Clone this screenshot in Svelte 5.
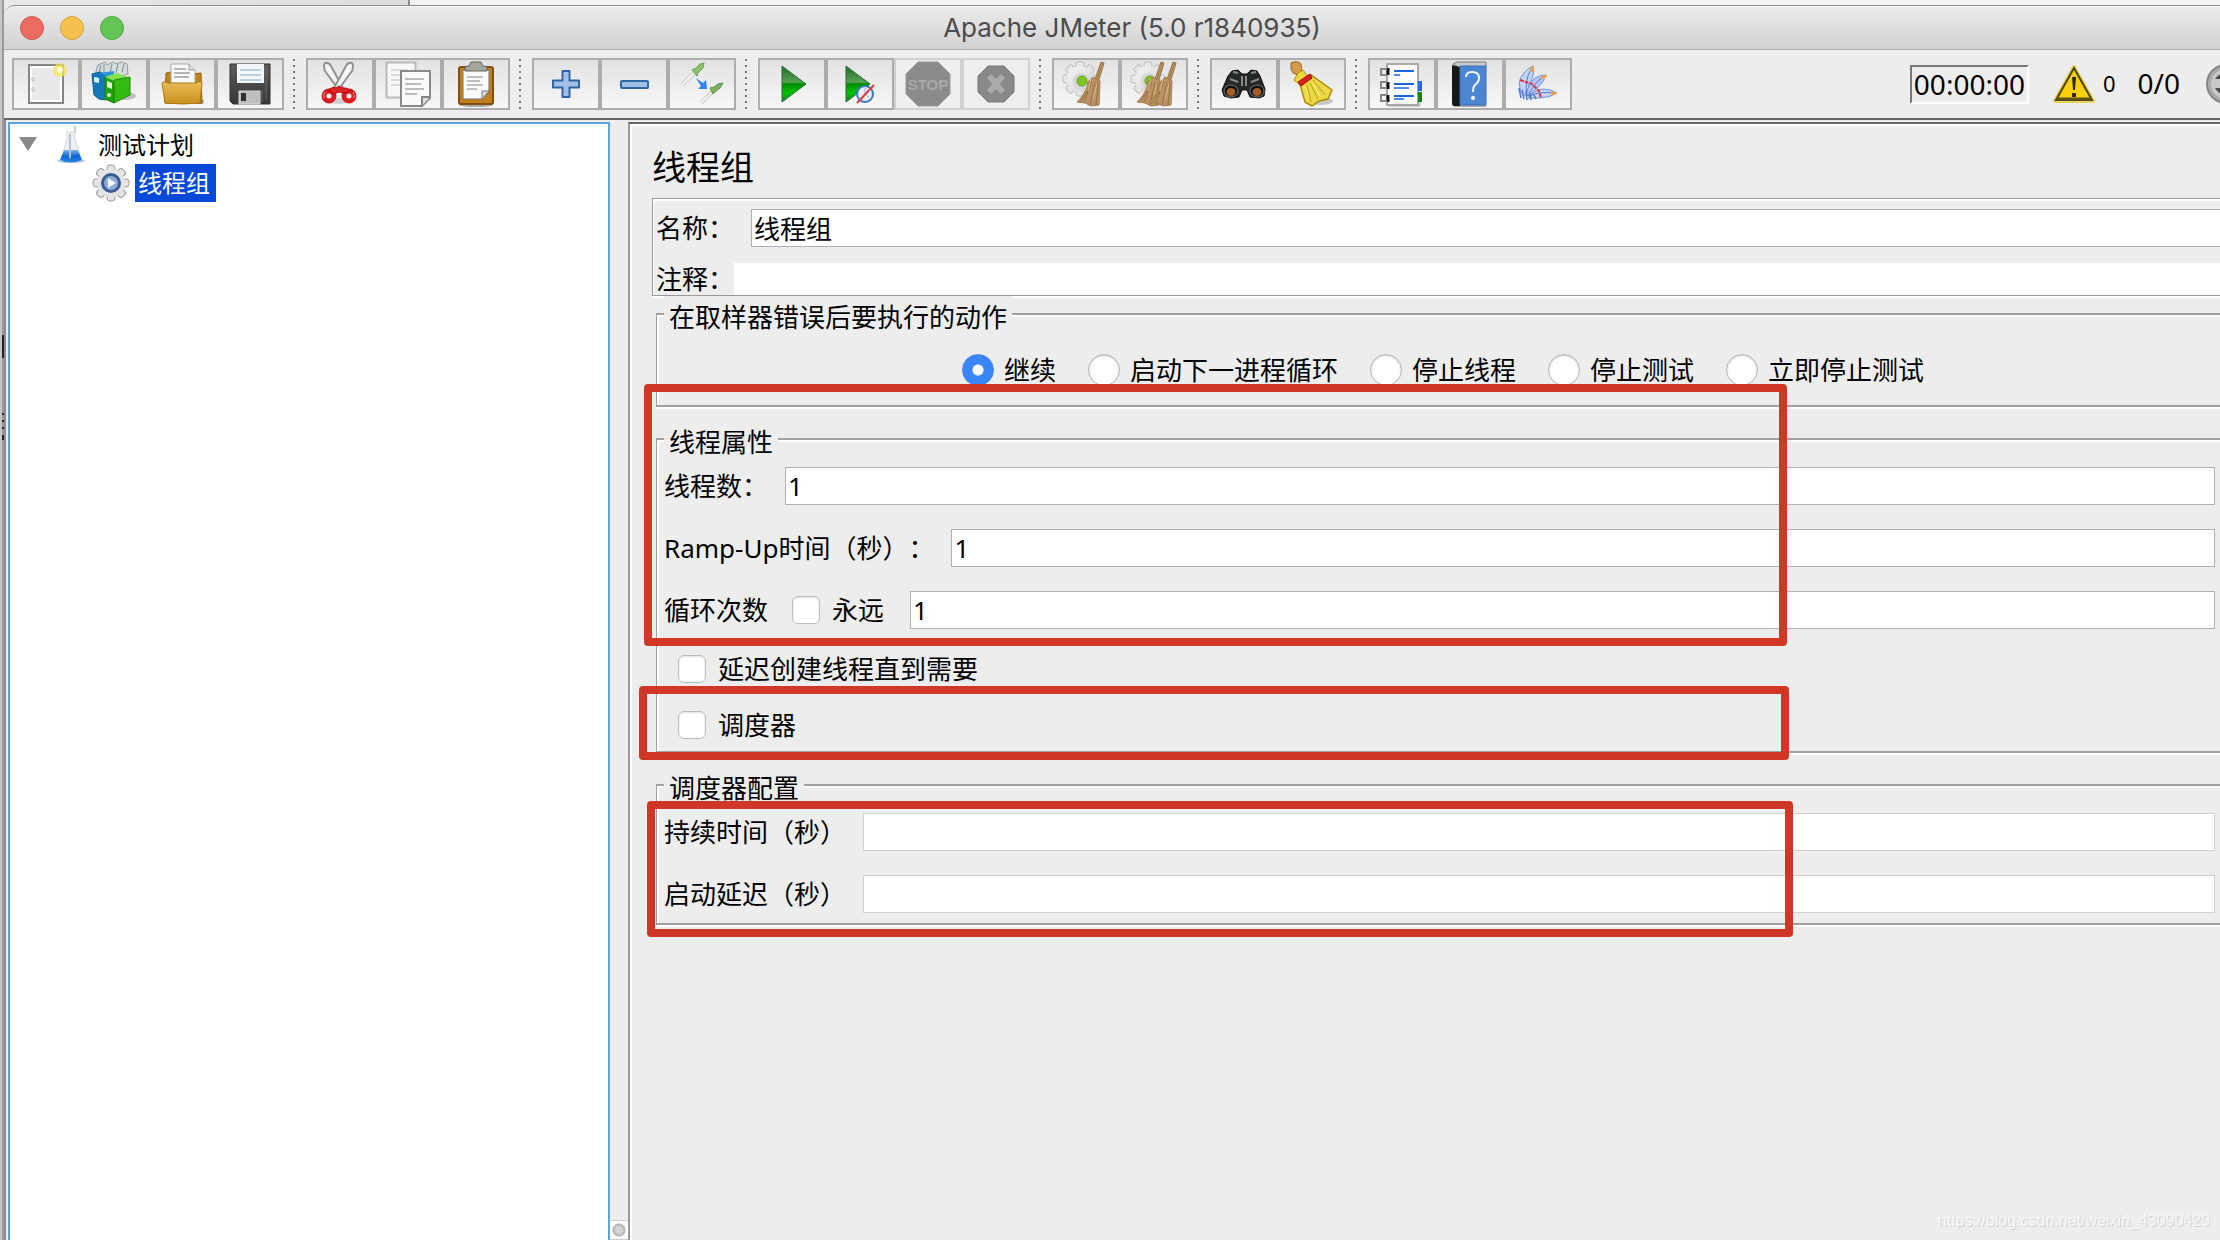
<script lang="ts">
	interface Tool {
		id: string;
		label: string;
		disabled?: boolean;
	}

	/* Toolbar buttons, one array per separated group. */
	const TOOL_GROUPS: Tool[][] = [
		[
			{ id: 'new', label: '新建' },
			{ id: 'templates', label: '模板' },
			{ id: 'open', label: '打开' },
			{ id: 'save', label: '保存' }
		],
		[
			{ id: 'cut', label: '剪切' },
			{ id: 'copy', label: '复制' },
			{ id: 'paste', label: '粘贴' }
		],
		[
			{ id: 'expand', label: '展开' },
			{ id: 'collapse', label: '折叠' },
			{ id: 'toggle', label: '切换' }
		],
		[
			{ id: 'start', label: '启动' },
			{ id: 'start-no-timers', label: '不停顿启动' },
			{ id: 'stop', label: '停止', disabled: true },
			{ id: 'shutdown', label: '关闭', disabled: true }
		],
		[
			{ id: 'clear', label: '清除' },
			{ id: 'clear-all', label: '清除全部' }
		],
		[
			{ id: 'search', label: '查找' },
			{ id: 'search-reset', label: '重置查找' }
		],
		[
			{ id: 'functions', label: '函数助手' },
			{ id: 'help', label: '帮助' },
			{ id: 'about', label: '关于' }
		]
	];

	const ERROR_ACTIONS = ['继续', '启动下一进程循环', '停止线程', '停止测试', '立即停止测试'];

	/* Teeth of the gear icons, one every 45 degrees. */
	const TEETH = [0, 45, 90, 135, 180, 225, 270, 315];

	let onError = $state('继续');
	let name = $state('线程组');
	let comment = $state('');
	let threads = $state('1');
	let rampUp = $state('1');
	let loops = $state('1');
	let forever = $state(false);
	let delayed = $state(false);
	let scheduler = $state(false);
	let duration = $state('');
	let startDelay = $state('');
</script>

{#snippet gear()}
	{#each TEETH as angle (angle)}
		<rect x="14" y="2" width="8" height="8" rx="2" fill="#e6e6e6" stroke="#bdbdbd" transform="rotate({angle} 18 19)" />
	{/each}
	<circle cx="18" cy="19" r="13" fill="url(#silver)" />
	<circle cx="19" cy="21" r="8" fill="#d6d6d6" />
	<circle cx="20" cy="21" r="5" fill="#7cc522" stroke="#62a41c" />
{/snippet}

{#snippet broom()}
	<path d="M39 2l3 1-6 20-4-1z" fill="#b08a5c" stroke="#9b784c" />
	<path d="M31 17l7 4-1 24-8 1-6-3-8-1c6-6 10-12 11-20z" fill="#bb9264" stroke="#a37c4c" />
	<path d="M30 21l-8 21M33 22l-5 23M36 23l-2 22M28 27l-9 14" stroke="#96733f" fill="none" />
	<path d="M29 19l-3 12M35 24l-4 15" stroke="#dcb88b" fill="none" />
{/snippet}

{#snippet icon(id: string)}
	<svg class="icon" viewBox="0 0 48 48" width="48" height="48" aria-hidden="true">
		{#if id === 'new'}
			<rect x="7" y="5" width="34" height="38" fill="#fff" stroke="#858585" stroke-width="2" />
			<rect x="10" y="8" width="28" height="32" fill="#e9e9e9" />
			<path d="M10 18h2v3h-2zM10 28h2v3h-2z" fill="#fff" stroke="#bbb" />
			<circle cx="38" cy="10" r="7" fill="#f3e45a" opacity=".75" />
			<circle cx="38" cy="10" r="3" fill="#fffbd8" />
		{:else if id === 'templates'}
			<ellipse cx="34" cy="36" rx="12" ry="4" fill="#999" opacity=".6" />
			<path d="M5 15l3-10 7-3 2 3 6-3 3 2 5-2 6 2 1 10-16 6z" fill="#d4dcdf" stroke="#8e999d" />
			<path d="M9 13l2-8M14 13V4M20 13l2-9M26 13l2-9M32 12l2-8" stroke="#7f8b90" fill="none" />
			<path d="M2 14l8-2 6 3v25l-7-1-5-4z" fill="#1679bb" stroke="#0b5d95" />
			<path d="M9 13l15-2v10l-9 7V15z" fill="#2f95d4" />
			<path d="M4 17l5 1v5l-5-1z" fill="#d8f1ff" />
			<path d="M15 17l9 3v23l-9-4z" fill="#22a30d" stroke="#158204" />
			<path d="M15 17l12-4 13 5-16 3z" fill="#83e452" />
			<path d="M24 20l16-3v18l-16 8z" fill="#35ba14" stroke="#1c8a05" />
			<path d="M17 21l5 2v6l-5-2z" fill="#ddffd0" />
			<circle cx="19" cy="35" r="2" fill="#d8ffc7" />
		{:else if id === 'open'}
			<path d="M5 44h40l1-4z" fill="#999" />
			<path d="M8 13l5-1 2 4h20v-2l8-1 1 30H7z" fill="#bd841a" stroke="#95610b" />
			<path d="M13 4h18l6 6v15H13z" fill="#fafafa" stroke="#a8a8a8" />
			<path d="M31 4v6h6" fill="#ddd" stroke="#999" />
			<path d="M16 9h12M16 13h16M16 17h15" stroke="#a0a0a0" stroke-width="1.5" />
			<path d="M4 23q2-3 6 0h28q5-3 6 0l-2 20q-17 2-35 0z" fill="url(#gold)" stroke="#ad7811" />
		{:else if id === 'save'}
			<path d="M4 4h40v40H7l-3-3z" fill="url(#dark)" stroke="#303030" />
			<path d="M11 4h27v19H11z" fill="#f3f7fa" />
			<path d="M14 10h21M14 15h21M14 20h21" stroke="#a9c4d5" stroke-width="1.5" />
			<path d="M13 31h21v13H13z" fill="#bdbdbd" stroke="#d8d8d8" />
			<path d="M15 33h5v8h-5z" fill="#303030" />
			<path d="M36 30v12M40 8v32" stroke="#696969" />
		{:else if id === 'cut'}
			<ellipse cx="23" cy="41" rx="10" ry="3" fill="#aaa" opacity=".5" />
			<path d="M9 3q4-1 6 3l12 22-4 2L9 11q-2-5 0-8z" fill="#f1f1f1" stroke="#929292" stroke-width="2" />
			<path d="M36 3q-4-1-6 3L18 28l4 2L36 11q2-5 0-8z" fill="#f6f6f6" stroke="#929292" stroke-width="2" />
			<ellipse cx="13" cy="36" rx="5" ry="5" fill="none" stroke="#db1c21" stroke-width="5" />
			<ellipse cx="33" cy="36" rx="5" ry="5" fill="none" stroke="#db1c21" stroke-width="5" />
			<path d="M12 30q5-4 8-2l3-2 3 2q5-1 9 3l-7 2-5-1-5 2z" fill="#df2428" stroke="#b9080e" />
			<path d="M9 32q-2 3-1 6M37 32q2 3 1 6" stroke="#ff8c8c" fill="none" />
		{:else if id === 'copy'}
			<path d="M2.5 2.5h29v35h-29z" fill="#f8f8f8" stroke="#b9b9b9" stroke-width="2" />
			<path d="M7 10h16M7 15h16M7 20h9M7 25h9" stroke="#d0d0d0" stroke-width="1.5" />
			<path d="M17 11h29v27l-8 8H17z" fill="#fafafa" stroke="#898989" stroke-width="2" />
			<path d="M46 37h-8v9" fill="#ddd" stroke="#858585" stroke-width="2" />
			<path d="M21 19h19M21 24h16M21 29h19M21 34h12" stroke="#a8a8a8" stroke-width="1.5" />
		{:else if id === 'paste'}
			<ellipse cx="24" cy="45" rx="17" ry="2" fill="#aaa" />
			<rect x="7" y="7" width="34" height="37" rx="2" fill="#c27e1c" stroke="#80500e" stroke-width="2" />
			<path d="M11 10h26v22l-7 7H11z" fill="#fafafa" stroke="#777" />
			<path d="M37 31h-7v8z" fill="#ddd" stroke="#777" />
			<path d="M13 11V8q0-2 4-2l2-4h10l2 4q4 0 4 2v3z" fill="#a4a79d" stroke="#62655d" />
			<path d="M15 17h16M15 21h13M15 25h16M15 29h10" stroke="#aaa" stroke-width="1.5" />
		{:else if id === 'expand'}
			<path d="M20.5 11h7v9.5H37v7h-9.5V37h-7v-9.5H11v-7h9.5z" fill="#a1c1e4" stroke="#2f65a5" stroke-width="2" stroke-linejoin="round" />
		{:else if id === 'collapse'}
			<rect x="11" y="21" width="27" height="7" rx="1" fill="#a1c1e4" stroke="#2f65a5" stroke-width="2" />
		{:else if id === 'toggle'}
			<path d="M4 25l12-12" stroke="#cfcfcf" stroke-width="4" />
			<path d="M4 25l12-12" stroke="#f4f4f4" stroke-width="2" />
			<path d="M14 10l4-2 4-4 4-1-1 5-5 5-1 3z" fill="#8cc070" stroke="#6aa055" />
			<path d="M23 43l11-11" stroke="#cfcfcf" stroke-width="4" />
			<path d="M23 43l11-11" stroke="#f4f4f4" stroke-width="2" />
			<path d="M32 28l4-1 4-3 5-1-3 5-5 4-2 2z" fill="#7ab15f" stroke="#5d9448" />
			<path d="M18 18l7 5 3-3 1 9h-9l3-3z" fill="#2f83ee" />
		{:else if id === 'start'}
			<path d="M14 6l24 18-24 18z" fill="url(#green)" stroke="#26732a" />
		{:else if id === 'start-no-timers'}
			<path d="M10 6l24 18-24 18z" fill="url(#green)" stroke="#26732a" />
			<circle cx="29" cy="34" r="8" fill="#e9eff7" stroke="#3b79c0" stroke-width="2" />
			<path d="M29 28v6l4 4" stroke="#98aed0" fill="none" />
			<path d="M21 43l17-18" stroke="#df3a43" stroke-width="2" />
		{:else if id === 'stop'}
			<path d="M14 2h20l12 12v20L34 46H14L2 34V14z" fill="#8b8b8b" stroke="#9b9b9b" />
			<text class="stop-text" x="24" y="30" text-anchor="middle" fill="#a8a8a8">STOP</text>
		{:else if id === 'shutdown'}
			<path d="M16 6h16l10 10v16L32 42H16L6 32V16z" fill="#898989" stroke="#777" />
			<path d="M15 18l4-4 5 5 5-5 4 4-5 6 5 6-4 4-5-5-5 5-4-4 5-6z" fill="#aaa" />
		{:else if id === 'clear'}
			{@render gear()}
			{@render broom()}
		{:else if id === 'clear-all'}
			{@render gear()}
			<g transform="translate(-8 0)">{@render broom()}</g>
			<g transform="translate(4 0)">{@render broom()}</g>
		{:else if id === 'search'}
			<path d="M12 11l6-1 4 4h5l4-4 6 1 3 5 5 13-1 7-5 2-9-1-3-7h-5l-3 7-8 1-7-2-2-6 6-14z" fill="#262828" stroke="#0e0f0f" />
			<path d="M13 12l5 1M31 13l5-1M10 19l8 3M31 22l8-3M22 16v10M26 16v10" stroke="#868a8b" stroke-width="2" />
			<ellipse cx="11" cy="31" rx="7" ry="6" fill="#111" stroke="#777" />
			<ellipse cx="37" cy="31" rx="7" ry="6" fill="#111" stroke="#777" />
			<ellipse cx="11" cy="32" rx="4.5" ry="4" fill="#a45f28" />
			<ellipse cx="37" cy="32" rx="4.5" ry="4" fill="#a45f28" />
		{:else if id === 'search-reset'}
			<ellipse cx="31" cy="41" rx="14" ry="4" fill="#999" opacity=".5" />
			<path d="M3 3q6-3 10 1l1 7-4 4-5-2-2-4z" fill="#d49b48" stroke="#95631c" />
			<path d="M6 20l4-7 5-3 5 7-8 8z" fill="#eed53d" stroke="#a9900c" />
			<path d="M12 24l11-9 21 15-4 9-9 2-7 5-7-4z" fill="#ecd944" stroke="#a98f08" stroke-width="1.5" />
			<path d="M10 22l12-8 2 4-11 8z" fill="#d82020" stroke="#a40e0e" />
			<path d="M19 25l4 17M22 23l8 16M25 20l12 15" stroke="#b69c16" fill="none" />
			<path d="M17 26l4 12M25 24l7 12" stroke="#fff387" fill="none" />
		{:else if id === 'functions'}
			<path d="M9 4h31v41H9z" fill="#fdfdfd" stroke="#a8a8a8" stroke-width="2" />
			<path d="M10 46h32v-4" fill="none" stroke="#aaa" />
			<path d="M40 21h4v10h-4z" fill="#216ce6" />
			<path d="M40 32h4v10h-4z" fill="#118512" />
			<path d="M10 8v7M10 22v7M10 35v7" fill="none" stroke="#111" stroke-width="3" />
			<path d="M9 9H3v6h6M9 22H3v6h6M9 35H3v6h6" stroke="#888" stroke-width="2" fill="none" />
			<path d="M16 11h20M16 24h20M16 36h20" stroke="#1764dc" stroke-width="2" />
			<path d="M16 15h6M16 28h15M16 39h10" stroke="#4f8be8" stroke-width="2" />
		{:else if id === 'help'}
			<path d="M8 46h32" stroke="#aaa" stroke-width="2" />
			<path d="M7 4l4-2h29v5L14 8z" fill="#c7cbd0" stroke="#777" />
			<path d="M6 5l8 2v39H8q-2 0-2-3z" fill="#171717" />
			<path d="M14 6h26v39H14z" fill="#4c86d3" stroke="#3b6eae" />
			<path d="M20 17q0-5 6-5 7 0 7 6 0 4-4 7-2 2-2 7" stroke="#f1f7ff" stroke-width="2" fill="none" />
			<circle cx="27" cy="38" r="2" fill="#fff" />
		{:else if id === 'about'}
			<!-- Three feathers fanned out from the lower left. -->
			<path d="M9 35Q1 22 10 13q4-5 9-7 2 9-4 19l-2 10z" fill="#c3d3f3" stroke="#6f92d8" />
			<path d="M12 36q2-12 9-18 5-3 11-3-3 9-11 15l-6 6z" fill="#b3c7f0" stroke="#6f92d8" />
			<path d="M14 38q6-8 15-9 8 0 14 4-8 5-17 5z" fill="#c3d3f3" stroke="#6f92d8" />
			<path d="M17 9Q10 22 13 36M29 17Q19 24 14 36M40 33q-13-2-25 3" stroke="#5479ce" fill="none" />
			<path d="M5 28l2 10M8 30l2 9M12 31l1 9M16 33l1 7M20 35l2 4" stroke="#4a74cf" stroke-width="1.5" />
			<path d="M6 20l6 2 6 2 4 4 3 3 2 7" fill="none" stroke="#df3250" stroke-width="2" stroke-dasharray="4 1" />
			<path d="M16 11l3-5v6M27 17l6-2-3 4M37 32l6 1-5 2" fill="#f2a23b" stroke="#f2a23b" />
		{/if}
	</svg>
{/snippet}

<svg class="defs" width="0" height="0" aria-hidden="true">
	<defs>
		<linearGradient id="silver" x2="1" y2="1">
			<stop stop-color="#f7f7f7" /><stop offset="1" stop-color="#cfcfcf" />
		</linearGradient>
		<linearGradient id="gold" x2="0" y2="1">
			<stop stop-color="#e8bd58" /><stop offset="1" stop-color="#c98f1d" />
		</linearGradient>
		<linearGradient id="dark" x2="0" y2="1">
			<stop stop-color="#5d5d5d" /><stop offset="1" stop-color="#373535" />
		</linearGradient>
		<linearGradient id="green" x2="0" y2="1">
			<stop stop-color="#1f6d28" /><stop offset=".45" stop-color="#55a052" />
			<stop offset=".5" stop-color="#008c00" /><stop offset=".75" stop-color="#05c205" /><stop offset="1" stop-color="#1c7a22" />
		</linearGradient>
		<linearGradient id="liquid" x2="0" y2="1">
			<stop stop-color="#7eb4e8" /><stop offset=".5" stop-color="#0966d8" /><stop offset="1" stop-color="#2f87e3" />
		</linearGradient>
	</defs>
</svg>

<div class="desktop">
	<div class="window">
		<header class="titlebar">
			<div class="lights">
				<button class="light light--close" aria-label="关闭窗口"></button>
				<button class="light light--min" aria-label="最小化"></button>
				<button class="light light--max" aria-label="缩放"></button>
			</div>
			<span class="title">Apache JMeter (5.0 r1840935)</span>
		</header>

		<div class="toolbar" role="toolbar">
			{#each TOOL_GROUPS as group, i (i)}
				<div class="group">
					{#each group as tool (tool.id)}
						<button class="tool" aria-label={tool.label} disabled={tool.disabled}>
							{@render icon(tool.id)}
						</button>
					{/each}
				</div>
			{/each}

			<div class="status">
				<span class="timer">00:00:00</span>
				<button class="warn" aria-label="日志">
					<svg width="42" height="38" viewBox="0 0 42 38" aria-hidden="true">
						<path d="M21 2L40 36H2z" fill="#fbd009" stroke="#e8d462" stroke-width="4" stroke-linejoin="round" />
						<path d="M21 3L39 35H3z" fill="#fbd009" stroke="#4b420f" stroke-width="2" />
						<path d="M3 34h36" stroke="#5e5114" stroke-width="3" />
						<path d="M19 12h4l-1 13h-2zM19 28h4v4h-4z" fill="#302a0b" />
					</svg>
				</button>
				<span class="errors">0</span>
				<span class="active">0/0</span>
				<svg class="led" width="40" height="40" viewBox="0 0 40 40" aria-hidden="true">
					<circle cx="20" cy="20" r="19" fill="#aaa" stroke="#858585" stroke-width="2" />
					<circle cx="20" cy="20" r="15" fill="#c8c8c8" />
					<path d="M9 15q4-6 11-6v6zM9 24q4 7 11 7v-7z" fill="#4c4c4c" />
				</svg>
			</div>
		</div>

		<div class="body">
			<nav class="tree">
				<button class="twisty" aria-label="折叠节点"></button>
				<a class="node" href="#plan">
					<svg width="30" height="38" viewBox="0 0 30 38" aria-hidden="true">
						<path d="M19 0v6l-2 3" stroke="#ccc" stroke-width="2" fill="none" />
						<ellipse cx="15" cy="35" rx="14" ry="2" fill="#b9c8d8" />
						<path d="M11 6h8v7l6 21q-10 5-20 0l6-21z" fill="#edf0f2" stroke="#d3d9de" />
						<path d="M8 24h14l4 10q-11 5-22 0z" fill="url(#liquid)" />
						<path d="M14 8v24" stroke="#b6c2cc" stroke-width="2" />
					</svg>
					<span class="node__text">测试计划</span>
				</a>
				<a class="node node--child" href="#group" aria-current="true">
					<svg width="38" height="38" viewBox="0 0 38 38" aria-hidden="true">
						{#each TEETH as angle (angle)}
							<rect x="15" y="1" width="8" height="9" rx="3" fill="#e4e4e4" stroke="#9c9c9c" transform="rotate({angle} 19 19)" />
						{/each}
						<circle cx="19" cy="19" r="14" fill="#e4e4e4" />
						<circle cx="19" cy="19" r="8.5" fill="#8fa9d3" stroke="#3b5b93" stroke-width="3" />
						<path d="M16 14l8 5-8 5z" fill="#f4f7ff" />
					</svg>
					<span class="node__text node__text--selected">线程组</span>
				</a>
			</nav>

			<div class="divider"><button class="divider__knob" aria-label="折叠面板"></button></div>

			<main class="panel">
				<h1>线程组</h1>

				<div class="identity">
					<div class="row">
						<label for="name">名称：</label>
						<input id="name" type="text" bind:value={name} />
					</div>
					<div class="row row--comment">
						<label for="comment">注释：</label>
						<input id="comment" type="text" bind:value={comment} />
					</div>
				</div>

				<fieldset class="actions">
					<legend>在取样器错误后要执行的动作</legend>
					<div class="radios">
						{#each ERROR_ACTIONS as action (action)}
							<label class="radio">
								<input type="radio" name="on-error" value={action} bind:group={onError} />
								{action}
							</label>
						{/each}
					</div>
				</fieldset>

				<fieldset>
					<legend>线程属性</legend>
					<div class="row">
						<label for="threads">线程数：</label>
						<input id="threads" type="text" bind:value={threads} />
					</div>
					<div class="row">
						<label for="ramp">Ramp-Up时间（秒）：</label>
						<input id="ramp" type="text" bind:value={rampUp} />
					</div>
					<div class="row">
						<label for="loops">循环次数</label>
						<label class="check check--inline">
							<input type="checkbox" bind:checked={forever} />
							永远
						</label>
						<input id="loops" type="text" bind:value={loops} />
					</div>
					<label class="check">
						<input type="checkbox" bind:checked={delayed} />
						延迟创建线程直到需要
					</label>
					<label class="check">
						<input type="checkbox" bind:checked={scheduler} />
						调度器
					</label>
				</fieldset>

				<fieldset>
					<legend>调度器配置</legend>
					<div class="row">
						<label for="duration">持续时间（秒）</label>
						<input id="duration" type="text" disabled bind:value={duration} />
					</div>
					<div class="row">
						<label for="delay">启动延迟（秒）</label>
						<input id="delay" type="text" disabled bind:value={startDelay} />
					</div>
				</fieldset>

				<!-- Red callouts laid over the form. -->
				<div class="mark mark--properties"></div>
				<div class="mark mark--scheduler"></div>
				<div class="mark mark--config"></div>
				<span class="watermark">https://blog.csdn.net/weixin_43090420</span>
			</main>
		</div>
	</div>
	<div class="behind" aria-hidden="true"></div>
</div>

<style>
	:global(body) {
		margin: 0;
	}
	.defs {
		position: absolute;
	}
	.desktop {
		--face: #ededed;
		--etch: #a0a0a0;
		position: relative;
		box-sizing: border-box;
		height: 100vh;
		padding: 5px 0 0 4px;
		overflow: hidden;
		background: linear-gradient(90deg, #c6c6c6 2px, #9a9a9a 2px, #9a9a9a 4px, #e9e9e9 4px, #dcdcdc 408px, #888 408px, #888 410px, #f2f2f2 410px);
		font: 26px/30px 'Noto Sans', 'Noto Sans CJK SC', sans-serif;
		text-spacing-trim: space-all;
		color: #000;
	}
	/* Slivers of the window underneath, visible along the left edge. */
	.behind {
		position: absolute;
		left: 2px;
		top: 335px;
		width: 2px;
		height: 105px;
		background: linear-gradient(#222 23px, transparent 23px, transparent 78px, #222 78px, #222 80px, transparent 80px, transparent 85px, #222 85px, #222 87px, transparent 87px, transparent 92px, #222 92px, #222 94px, transparent 94px, transparent 100px, #222 100px);
	}
	.window {
		display: flex;
		flex-direction: column;
		height: 100%;
		overflow: hidden;
		border-radius: 10px 0 0 0;
		background: var(--face);
	}

	.titlebar {
		position: relative;
		display: flex;
		align-items: center;
		justify-content: center;
		box-sizing: border-box;
		height: 45px;
		flex: none;
		padding-left: 40px;
		border-top: 1px solid #8c8c8c;
		border-bottom: 1px solid #a9a9a9;
		border-radius: 10px 0 0 0;
		background: linear-gradient(#ebebeb, #d2d2d2);
		box-shadow: inset 0 1px 0 #f8f8f8;
	}
	.lights {
		position: absolute;
		left: 16px;
		display: flex;
		gap: 16px;
	}
	.light {
		width: 24px;
		height: 24px;
		padding: 0;
		border: 1px solid #d6574e;
		border-radius: 50%;
		background: #ec6a5f;
	}
	.light--min {
		border-color: #d9a03c;
		background: #f5bf4f;
	}
	.light--max {
		border-color: #50a83e;
		background: #62c655;
	}
	.title {
		font-family: Inter, sans-serif;
		color: #4b4b4b;
	}

	.toolbar {
		display: flex;
		align-items: center;
		box-sizing: border-box;
		height: 70px;
		flex: none;
		padding: 0 0 0 8px;
		border-bottom: 2px solid #666;
	}
	.group {
		display: flex;
		align-items: center;
	}
	/* Dotted separator between groups. */
	.group + .group::before {
		content: '';
		width: 2px;
		height: 50px;
		margin: 0 11px 0 9px;
		background: repeating-linear-gradient(#777 0 2px, transparent 2px 6px);
	}
	.tool {
		box-sizing: border-box;
		width: 68px;
		height: 52px;
		padding: 0;
		border: 2px solid #acacac;
		background: linear-gradient(#e2e2e2, #f7f7f7);
	}
	.tool:disabled {
		border-color: #d0d0d0;
		background: #eee;
	}
	.icon {
		display: block;
		margin: 0 auto;
	}
	.stop-text {
		font: bold 15px 'Liberation Sans', sans-serif;
	}
	.status {
		display: flex;
		align-items: center;
		margin: 0 -26px 0 auto;
		font-size: 28px;
	}
	.timer {
		box-sizing: border-box;
		height: 39px;
		padding: 0 2px;
		border: 2px solid #fff;
		border-top-color: #777;
		border-left-color: #777;
		line-height: 34px;
	}
	.warn {
		display: flex;
		margin: 0 8px 0 24px;
		padding: 0;
		border: 0;
		background: none;
	}
	.errors {
		padding-bottom: 2px;
		font-size: 22px;
	}
	.active {
		margin: 0 26px 0 22px;
		padding-bottom: 2px;
	}
	.led {
		flex: none;
	}

	.body {
		display: flex;
		flex: 1;
		min-height: 0;
		padding: 2px 0 0 2px;
		border-left: 2px solid #8b8b8b;
	}
	.tree {
		position: relative;
		box-sizing: border-box;
		flex: 0 0 602px;
		border: 2px solid #5fa3dc;
		border-bottom: 0;
		background: #fff;
		font-size: 24px;
	}
	.twisty {
		position: absolute;
		left: 9px;
		top: 13px;
		width: 18px;
		height: 14px;
		padding: 0;
		border: 0;
		background: #888;
		clip-path: polygon(0 0, 100% 0, 50% 100%);
	}
	.node {
		display: flex;
		align-items: center;
		height: 38px;
		gap: 5px;
		margin: 2px 0 0 46px;
		color: inherit;
		text-decoration: none;
	}
	.node--child {
		margin: 0 0 0 82px;
	}
	.node__text {
		padding: 0 6px 0 3px;
		line-height: 38px;
	}
	.node:not(.node--child) .node__text {
		padding-left: 7px;
	}
	.node__text--selected {
		background: #0849d9;
		color: #fff;
	}

	.divider {
		display: flex;
		align-items: flex-end;
		flex: 0 0 18px;
	}
	.divider__knob {
		width: 18px;
		height: 20px;
		padding: 0;
		border: 0;
		border-top: 1px solid #ccc;
		border-bottom: 1px solid #ccc;
		background: radial-gradient(circle, #d5d5d5 3px, #b2b2b2 6px, #fff 7px);
	}

	.panel {
		position: relative;
		flex: 1;
		min-width: 0;
		padding: 22px 0 0 20px;
		border-top: 2px solid #666;
		border-left: 2px solid #999;
		box-shadow: inset 2px 2px 0 #fff;
	}
	h1 {
		margin: 1px 0 11px 2px;
		font-size: 34px;
		font-weight: 400;
		line-height: 40px;
	}
	.identity {
		margin: 0 -10px 0 2px;
		padding: 10px 0 0 3px;
		border: 1px solid #999;
		box-shadow:
			inset 1px 2px 0 #fff,
			0 2px 0 #fff;
	}
	.row {
		display: flex;
		align-items: center;
		gap: 17px;
	}
	.row--comment {
		gap: 0;
		margin-top: 16px;
	}
	label {
		white-space: nowrap;
	}
	input[type='text'] {
		flex: 1;
		min-width: 0;
		box-sizing: border-box;
		height: 38px;
		padding: 0 2px;
		border: 1px solid #b0b0b0;
		border-radius: 0;
		outline: 0;
		background: #fff;
		color: inherit;
		font: inherit;
	}
	input[type='text']:disabled {
		border-color: #d0d0d0;
	}
	.row--comment input[type='text'] {
		height: 32px;
		border: 0;
	}

	fieldset {
		display: flex;
		flex-direction: column;
		gap: 24px;
		min-width: 0;
		margin: 0 -10px 14px 6px;
		padding: 10px 14px 10px 7px;
		border: 1px solid var(--etch);
		border-width: 2px 1px;
		box-shadow:
			inset 2px 2px 0 #fff,
			0 2px 0 #fff;
	}
	.actions {
		padding-top: 22px;
		padding-bottom: 19px;
	}
	legend {
		padding: 6px 5px 0;
		background: var(--face);
	}
	.radios {
		display: flex;
		justify-content: center;
		gap: 32px;
		margin-left: 7px;
	}
	.radio {
		display: flex;
		align-items: center;
		gap: 10px;
		height: 32px;
	}
	.radio input {
		box-sizing: border-box;
		width: 32px;
		height: 32px;
		margin: 0;
		appearance: none;
		border: 1px solid #b4b4b4;
		border-radius: 50%;
		background: #fff;
		box-shadow: inset 0 1px 2px #ccc;
	}
	.radio input:checked {
		border-color: #3b86f7;
		background: radial-gradient(circle, #fff 5px, #3b86f7 6px);
		box-shadow: none;
	}
	.check {
		display: flex;
		align-items: center;
		gap: 12px;
		height: 32px;
		margin-left: 14px;
	}
	.check--inline {
		margin: 0 9px 0 7px;
	}
	.check input {
		box-sizing: border-box;
		width: 28px;
		height: 28px;
		margin: 0;
		appearance: none;
		border: 1px solid #bdbdbd;
		border-radius: 6px;
		background: #fff;
		box-shadow: inset 0 1px 2px #ddd;
	}
	.check input:checked {
		background: #3b86f7;
	}

	.mark {
		position: absolute;
		box-sizing: border-box;
		border: 8px solid #d03727;
		border-radius: 4px;
		pointer-events: none;
	}
	.mark--properties {
		top: 260px;
		left: 14px;
		width: 1143px;
		height: 262px;
	}
	.mark--scheduler {
		top: 562px;
		left: 9px;
		width: 1150px;
		height: 74px;
	}
	.mark--config {
		top: 677px;
		left: 17px;
		width: 1146px;
		height: 136px;
	}
	.watermark {
		position: absolute;
		right: 10px;
		bottom: 8px;
		font: 16px/22px 'Liberation Sans', sans-serif;
		color: #f8f8f8;
		text-shadow: 1px 1px 0 #d2d2d2;
	}
</style>
